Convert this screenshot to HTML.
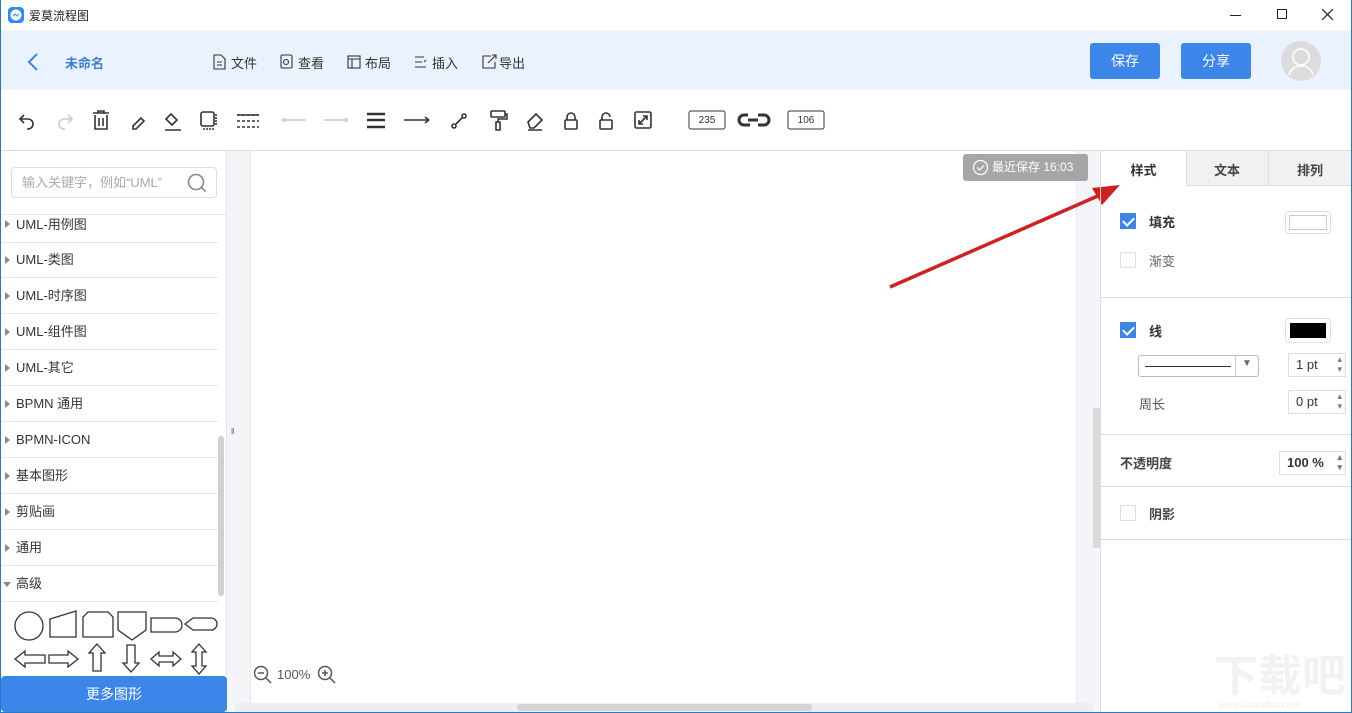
<!DOCTYPE html>
<html><head><meta charset="utf-8"><style>
*{margin:0;padding:0;box-sizing:border-box}
html,body{width:1352px;height:713px;overflow:hidden}
body{position:relative;background:#fff;font-family:"Liberation Sans","Noto Sans CJK SC",sans-serif;color:#333;font-size:13px}
.a{position:absolute;white-space:nowrap}
.frame{position:absolute;left:0;top:0;width:1352px;height:713px;border:1px solid #2b79c2;border-top:none;pointer-events:none;z-index:50}
.menu span{position:absolute;top:53px;font-size:13px;color:#333}
.row{position:absolute;left:0;width:218px;height:36px;border-bottom:1px solid #e6e6e6;font-size:13px;line-height:36px;padding-left:16px;color:#333}
.row:before{content:"";position:absolute;left:5px;top:14px;border-left:5px solid #888;border-top:4px solid transparent;border-bottom:4px solid transparent}
.row.open:before{left:3px;top:16px;border-top:5px solid #888;border-left:4px solid transparent;border-right:4px solid transparent;border-bottom:none}
.cb{position:absolute;width:16px;height:16px;border:1px solid #ddd;background:#fff}
.cb.on{background:#3c86ea;border-color:#3c86ea}
.cb.on:after{content:"";position:absolute;left:4px;top:1px;width:5px;height:9px;border:solid #fff;border-width:0 2px 2px 0;transform:rotate(45deg)}
.sep{position:absolute;left:1101px;width:251px;height:1px;background:#ddd}
.spin{position:absolute;border:1px solid #ddd;height:24px;font-size:13px;line-height:22px;padding-left:7px}
.spin:after{content:"▴\A▾";white-space:pre;position:absolute;right:3px;top:0;font-size:9px;line-height:10px;color:#777}
</style></head><body>
<div class="frame"></div>
<svg class="a" style="left:8px;top:7px" width="16" height="16"><rect width="16" height="16" rx="4" fill="#2d8cf0"/><circle cx="8" cy="8" r="5.5" fill="#fff"/><path d="M5 9l2-2 2 2 2-2" stroke="#2d8cf0" fill="none" stroke-width="1"/></svg>
<div class="a" style="left:29px;top:7px;font-size:12px;color:#222">爱莫流程图</div>
<div class="a" style="left:1230px;top:15px;width:11px;height:1px;background:#222"></div>
<div class="a" style="left:1277px;top:9px;width:10px;height:10px;border:1px solid #222"></div>
<svg class="a" style="left:1322px;top:9px" width="11" height="11" stroke="#222" stroke-width="1.2"><path d="M0 0l11 11M11 0L0 11"/></svg>
<div class="a" style="left:0;top:30px;width:1352px;height:60px;background:#eaf2fd"></div>
<svg class="a" style="left:26px;top:52px" width="14" height="20"><path d="M11 2L3 10l8 8" stroke="#3c86ea" stroke-width="2" fill="none"/></svg>
<div class="a" style="left:65px;top:53px;font-size:13px;font-weight:bold;color:#3c7dd0">未命名</div>
<svg class="a" style="left:212px;top:54px" width="320" height="16" fill="none" stroke="#333" stroke-width="1.1">
<path d="M2 1h7l4 4v10H2zM5 8h5M5 11h5"/>
<rect x="69" y="1" width="11" height="13" rx="1.5"/><circle cx="74" cy="8" r="2.5"/>
<rect x="136" y="2" width="12" height="12"/><path d="M136 5h12M140 5v9"/>
<path d="M203 3h9M203 8h7M203 13h11M214 6l-2 2"/>
<path d="M279 2h-8v12h12V8M276 9l8-8M280 1h4v4"/>
</svg>
<div class="menu">
<span style="left:231px">文件</span><span style="left:298px">查看</span><span style="left:365px">布局</span><span style="left:432px">插入</span><span style="left:499px">导出</span>
</div>
<div class="a" style="left:1090px;top:43px;width:70px;height:36px;background:#3c86ea;border-radius:3px;color:#fff;font-size:14px;line-height:36px;text-align:center">保存</div>
<div class="a" style="left:1181px;top:43px;width:70px;height:36px;background:#3c86ea;border-radius:3px;color:#fff;font-size:14px;line-height:36px;text-align:center">分享</div>
<svg class="a" style="left:1281px;top:41px" width="40" height="40"><circle cx="20" cy="20" r="20" fill="#dcdcdc"/><circle cx="20" cy="16" r="8" stroke="#fff" stroke-width="1.6" fill="none"/><path d="M8 34c2-7 7-9 12-9s10 2 12 9" stroke="#fff" stroke-width="1.6" fill="none"/></svg>
<svg class="a" style="left:0;top:90px" width="840" height="60" fill="none" stroke="#333" stroke-width="1.6">
<path d="M24 25l-4 4 4 4M20 29h8a5 5 0 0 1 0 10h-1"/>
<path d="M68 25l4 4-4 4M72 29h-8a5 5 0 0 0 0 10h1" stroke="#ccc"/>
<path d="M93 23h16M98 23v-2h6v2M95 25v14h12V25M99 28v8M103 28v8"/>
<path d="M133 36l8-8 3 3-8 8h-3z"/>
<path d="M166 29l5-5 6 6-5 5-6-6zM165 40h16"/>
<rect x="201" y="22" width="13" height="14" rx="2"/><path d="M216 24v12M203 39h12" stroke-dasharray="2 1"/>
<path d="M237 25h22M237 31h22M237 37h22" stroke-dasharray="3 2"/><path d="M237 25h22" />
<path d="M282 30h24M282 30l3-2M282 30l3 2" stroke="#ccc"/><path d="M324 30h24M348 30l-3-2M348 30l-3 2" stroke="#ccc"/>
<path d="M367 24h18M367 30h18M367 37h18" stroke-width="2.6"/>
<path d="M404 30h25M429 30l-4-3M429 30l-4 3"/>
<circle cx="454" cy="36" r="2"/><circle cx="464" cy="26" r="2"/><path d="M456 34l6-6"/>
<rect x="491" y="21" width="14" height="6" rx="1"/><path d="M505 24h2v5h-9v3M496 32h4v8h-4z"/>
<path d="M528 32l8-8 6 6-8 8h-4zM528 40h14"/>
<rect x="565" y="30" width="12" height="9" rx="1"/><path d="M567 30v-3a4 4 0 0 1 8 0v3"/>
<rect x="600" y="30" width="12" height="9" rx="1"/><path d="M602 30v-3a4 4 0 0 1 8 0"/>
<rect x="635" y="22" width="16" height="16" rx="1.5"/><path d="M639 34l8-8M643 26h4v4M639 30v4h4"/>
<rect x="689" y="21" width="36" height="18" rx="2" stroke-width="1"/>
<path d="M748 25h-4a5 5 0 0 0 0 10h6M758 25h6a5 5 0 0 1 0 10h-6M748 30h10" stroke-width="3"/>
<rect x="788" y="21" width="36" height="18" rx="2" stroke-width="1"/>
</svg>
<div class="a" style="left:689px;top:115px;width:36px;text-align:center;font-size:10px">235</div>
<div class="a" style="left:788px;top:115px;width:36px;text-align:center;font-size:10px">106</div>
<div class="a" style="left:0;top:150px;width:1352px;height:1px;background:#ddd"></div>
<div class="a" style="left:11px;top:167px;width:206px;height:31px;border:1px solid #ddd;border-radius:4px;color:#aaa;font-size:13px;line-height:29px;padding-left:10px">输入关键字，例如“UML”</div>
<svg class="a" style="left:186px;top:172px" width="22" height="22" fill="none" stroke="#888" stroke-width="1.6"><circle cx="10" cy="10" r="7.5"/><path d="M15.5 15.5l4 4"/></svg>
<div class="a" style="left:0;top:214px;width:228px;height:1px;background:#e6e6e6"></div>
<div class="row" style="top:206px;height:37px;line-height:37px">UML-用例图</div>
<div class="row" style="top:242px">UML-类图</div>
<div class="row" style="top:278px">UML-时序图</div>
<div class="row" style="top:314px">UML-组件图</div>
<div class="row" style="top:350px">UML-其它</div>
<div class="row" style="top:386px">BPMN 通用</div>
<div class="row" style="top:422px">BPMN-ICON</div>
<div class="row" style="top:458px">基本图形</div>
<div class="row" style="top:494px">剪贴画</div>
<div class="row" style="top:530px">通用</div>
<div class="row open" style="top:566px">高级</div>
<div class="a" style="left:218px;top:436px;width:6px;height:160px;background:#d0d0d0;border-radius:3px"></div>
<div class="a" style="left:226px;top:151px;width:1px;height:562px;background:#e6e6e6"></div>
<svg class="a" style="left:0;top:606px" width="228" height="70" fill="none" stroke="#333" stroke-width="1.3">
<circle cx="29" cy="20" r="14"/>
<path d="M50 13l26-8v26H50z"/>
<path d="M88 6h20l5 5v20H83V11z"/>
<path d="M118 6h28v18l-14 10-14-10z"/>
<path d="M151 12h24a7 7 0 0 1 0 14h-24z"/>
<path d="M193 12h18a6 6 0 0 1 0 12h-18l-8-6z"/>
<path d="M15 53l10-8v4h20v8H25v4z"/>
<path d="M78 53l-10-8v4H49v8h19v4z"/>
<path d="M97 38l8 9h-4v18h-8V47h-4z"/>
<path d="M131 66l8-9h-4V39h-8v18h-4z"/>
<path d="M151 53l8-7v4h14v-4l8 7-8 7v-4h-14v4z"/>
<path d="M199 38l7 8h-4v14h4l-7 8-7-8h4V46h-4z"/>
</svg>
<div class="a" style="left:1px;top:676px;width:226px;height:36px;background:#3c86ea;border-radius:4px;color:#fff;font-size:14px;line-height:36px;text-align:center">更多图形</div>
<div class="a" style="left:227px;top:151px;width:874px;height:561px;background:#f4f5f8"></div>
<div class="a" style="left:231px;top:427px;font-size:8px;color:#555">‖</div>
<div class="a" style="left:250px;top:151px;width:827px;height:552px;background:#fff;border-left:1px solid #e8e8e8;border-right:1px solid #e8e8e8"></div>
<div class="a" style="left:1093px;top:408px;width:7px;height:140px;background:#dadada"></div>
<div class="a" style="left:235px;top:703px;width:858px;height:9px;background:#eceef1"></div>
<div class="a" style="left:517px;top:704px;width:295px;height:7px;background:#d3d3d3;border-radius:3px"></div>
<div class="a" style="left:963px;top:154px;width:125px;height:27px;background:#a6a6a6;border-radius:3px;color:#fff;font-size:12px;line-height:27px;padding-left:29px">最近保存 16:03</div>
<svg class="a" style="left:972px;top:159px" width="17" height="17" fill="none" stroke="#fff" stroke-width="1.2"><circle cx="8.5" cy="8.5" r="7"/><path d="M5 8.5l2.5 2.5 4.5-4.5"/></svg>
<svg class="a" style="left:253px;top:665px" width="20" height="20" fill="none" stroke="#555" stroke-width="1.5"><circle cx="8" cy="8" r="6.5"/><path d="M5 8h6M13 13l5 5"/></svg>
<div class="a" style="left:277px;top:667px;font-size:13px;color:#555">100%</div>
<svg class="a" style="left:317px;top:665px" width="20" height="20" fill="none" stroke="#555" stroke-width="1.5"><circle cx="8" cy="8" r="6.5"/><path d="M5 8h6M8 5v6M13 13l5 5"/></svg>
<svg class="a" style="left:880px;top:175px" width="250" height="120"><path d="M10 112L220 20" stroke="#d02020" stroke-width="3.5"/><path d="M240 10L212 13 222 30z" fill="#d02020"/></svg>
<div class="a" style="left:1100px;top:151px;width:1px;height:562px;background:#ddd"></div>
<div class="a" style="left:1186px;top:151px;width:166px;height:35px;background:#f0f1f3;border-bottom:1px solid #ddd;border-left:1px solid #ddd"></div>
<div class="a" style="left:1268px;top:151px;width:1px;height:35px;background:#ddd"></div>
<div class="a" style="left:1101px;top:160px;width:85px;text-align:center;font-weight:bold;font-size:13px">样式</div>
<div class="a" style="left:1186px;top:160px;width:82px;text-align:center;font-weight:bold;font-size:13px;color:#444">文本</div>
<div class="a" style="left:1268px;top:160px;width:84px;text-align:center;font-weight:bold;font-size:13px;color:#444">排列</div>
<div class="cb on" style="left:1120px;top:213px"></div><div class="a" style="left:1149px;top:212px;font-weight:bold">填充</div>
<div class="a" style="left:1285px;top:211px;width:46px;height:23px;border:1px solid #ddd;border-radius:4px"><div style="margin:3px;height:15px;border:1px solid #ccc"></div></div>
<div class="cb" style="left:1120px;top:252px"></div><div class="a" style="left:1149px;top:251px;color:#666">渐变</div>
<div class="sep" style="top:297px"></div>
<div class="cb on" style="left:1120px;top:322px"></div><div class="a" style="left:1149px;top:321px;font-weight:bold">线</div>
<div class="a" style="left:1285px;top:318px;width:46px;height:25px;border:1px solid #ddd;border-radius:4px"><div style="margin:4px;height:15px;background:#000"></div></div>
<div class="a" style="left:1138px;top:355px;width:121px;height:22px;border:1px solid #bbb;border-radius:3px"><div style="position:absolute;left:6px;top:10px;width:86px;height:1px;background:#333"></div><div style="position:absolute;left:96px;top:0;width:1px;height:20px;background:#ccc"></div><div style="position:absolute;left:103px;top:2px;font-size:10px;color:#666">▼</div></div>
<div class="spin" style="left:1288px;top:353px;width:58px">1 pt</div>
<div class="a" style="left:1139px;top:394px;color:#555">周长</div>
<div class="spin" style="left:1288px;top:390px;width:58px">0 pt</div>
<div class="sep" style="top:434px"></div>
<div class="a" style="left:1120px;top:453px;font-weight:bold;color:#444">不透明度</div>
<div class="spin" style="left:1279px;top:451px;width:67px;font-weight:bold">100 %</div>
<div class="sep" style="top:486px"></div>
<div class="cb" style="left:1120px;top:505px"></div><div class="a" style="left:1149px;top:504px;font-weight:bold;color:#444">阴影</div>
<div class="sep" style="top:539px"></div>
<div class="a" style="left:1214px;top:652px;font-size:44px;line-height:50px;color:#f2f2f2;font-weight:bold">下载吧</div>
<div class="a" style="left:1218px;top:700px;font-size:10px;line-height:12px;color:#eee">www.xiazaiba.com</div>
</body></html>
